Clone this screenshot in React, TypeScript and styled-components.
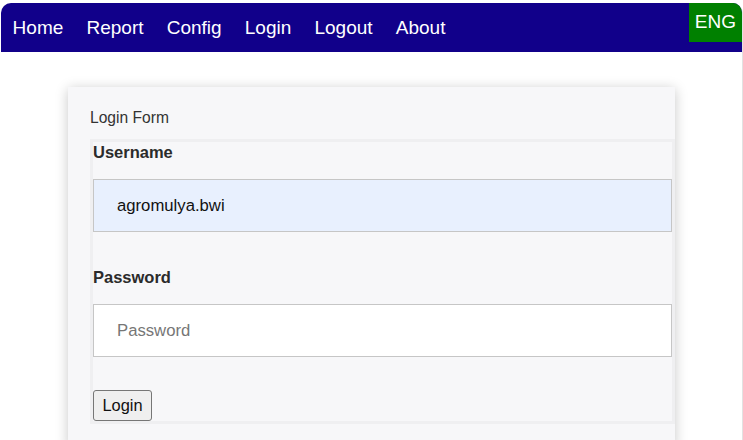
import React from "react";
import styled, { createGlobalStyle } from "styled-components";

const Global = createGlobalStyle`
  html, body { margin: 0; padding: 0; background: #ffffff; }
  body { font-family: "Liberation Sans", Arial, sans-serif; }
  * { box-sizing: border-box; }
`;

const Page = styled.div`
  margin: 3px 0 0 1px;
  width: 742px;
  min-height: 437px;
  border-right: 1px solid #e2e2e2;
  border-radius: 10px 10px 0 0;
  overflow: hidden;
  background: #ffffff;
`;

const Nav = styled.nav`
  display: flex;
  align-items: flex-start;
  height: 49px;
  background: #11008a;
`;

const NavLink = styled.a`
  color: #ffffff;
  font-size: 19px;
  line-height: 49px;
  padding: 0 11.6px;
  text-decoration: none;
  cursor: pointer;
`;

const Lang = styled.div`
  margin-left: auto;
  height: 39px;
  line-height: 38px;
  padding: 0 6px;
  background: #008000;
  color: #ffffff;
  font-size: 19px;
`;

const Main = styled.main`
  padding: 35px 0 0 67px;
`;

const Card = styled.form`
  width: 607px;
  min-height: 360px;
  padding: 22px 0 0 22px;
  background: #f7f7f9;
  box-shadow: 0 2px 12px rgba(0, 0, 0, 0.22);
`;

const Title = styled.div`
  font-size: 15.6px;
  line-height: 18px;
  color: #333333;
  margin-bottom: 12px;
`;

const Fieldset = styled.fieldset`
  margin: 0;
  padding: 0;
  min-width: 0;
  width: 585px;
  border: 3px solid #efeff1;
  display: flex;
  flex-direction: column;
  align-items: flex-start;
`;

const Label = styled.label<{ $top?: number }>`
  display: block;
  font-size: 16.5px;
  line-height: 19px;
  font-weight: bold;
  color: #2b2b2b;
  margin-top: ${(p) => p.$top ?? 1}px;
  margin-bottom: ${(p) => (p.$top ? 17 : 17)}px;
`;

const Input = styled.input<{ $filled?: boolean }>`
  display: block;
  width: 100%;
  height: 53px;
  margin: 0;
  padding: 0 23px;
  border: 1px solid #c6c6c6;
  background: ${(p) => (p.$filled ? "#e8f0fe" : "#ffffff")};
  font-family: "Liberation Sans", Arial, sans-serif;
  font-size: 16.7px;
  color: #111111;
  outline: none;
  &::placeholder { color: #767676; }
`;

const Button = styled.button`
  margin-top: 33px;
  height: 31px;
  padding: 0 8.5px;
  border: 1px solid #767676;
  border-radius: 3px;
  background: #efefef;
  font-family: "Liberation Sans", Arial, sans-serif;
  font-size: 16.4px;
  color: #111111;
`;

export default function App() {
  return (
    <>
      <Global />
      <Page>
        <Nav>
          <NavLink>Home</NavLink>
          <NavLink>Report</NavLink>
          <NavLink>Config</NavLink>
          <NavLink>Login</NavLink>
          <NavLink>Logout</NavLink>
          <NavLink>About</NavLink>
          <Lang>ENG</Lang>
        </Nav>
        <Main>
          <Card onSubmit={(e) => e.preventDefault()}>
            <Title>Login Form</Title>
            <Fieldset>
              <Label>Username</Label>
              <Input $filled defaultValue="agromulya.bwi" />
              <Label $top={36}>Password</Label>
              <Input type="password" placeholder="Password" />
              <Button type="submit">Login</Button>
            </Fieldset>
          </Card>
        </Main>
      </Page>
    </>
  );
}
